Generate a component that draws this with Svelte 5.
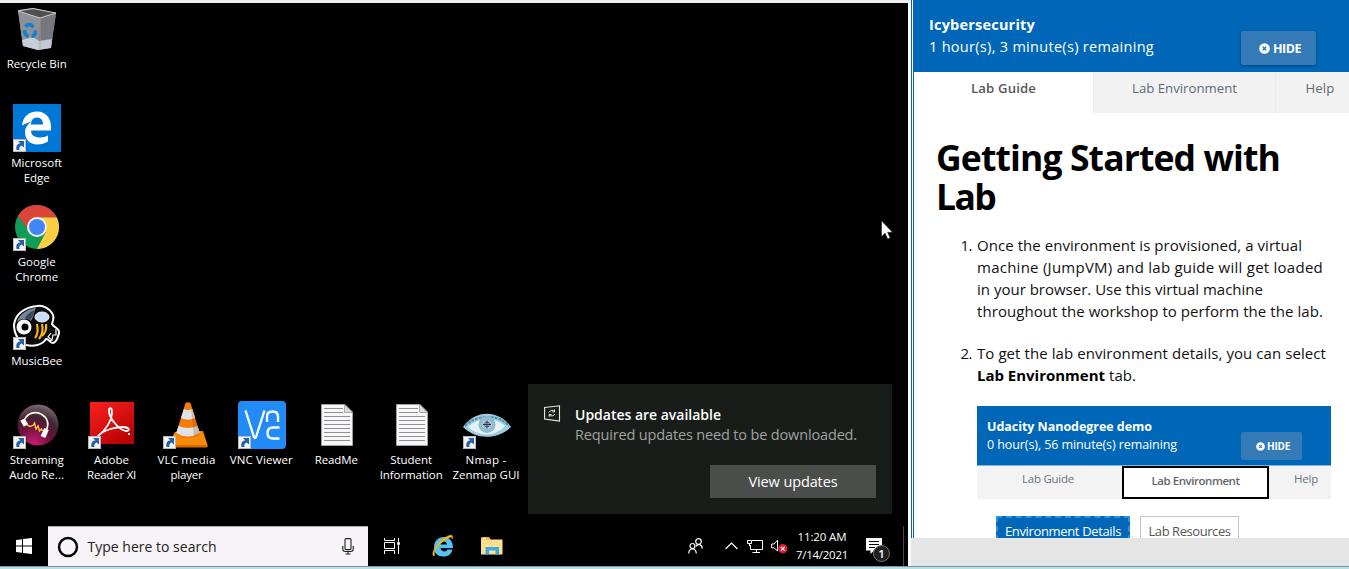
<script>
  // Spreads letter spacing so that a line of text takes the given width.
  function fit(node, width) {
    const natural = node.getBoundingClientRect().width;
    node.style.letterSpacing = (width - natural) / node.textContent.length + 'px';
  }

  const icons = [
    { id: 'bin', col: 1, row: 1, lines: [['Recycle Bin', 60]] },
    { id: 'edge', col: 1, row: 2, link: true, lines: [['Microsoft', 51], ['Edge', 26]] },
    { id: 'chrome', col: 1, row: 3, link: true, lines: [['Google', 38], ['Chrome', 43]] },
    { id: 'bee', col: 1, row: 4, link: true, lines: [['MusicBee', 51]] },
    { id: 'stream', col: 1, row: 5, link: true, lines: [['Streaming', 54], ['Audo Re...', 55]] },
    { id: 'adobe', col: 2, row: 5, link: true, lines: [['Adobe', 35], ['Reader XI', 49]] },
    { id: 'vlc', col: 3, row: 5, link: true, lines: [['VLC media', 58], ['player', 32]] },
    { id: 'vnc', col: 4, row: 5, link: true, lines: [['VNC Viewer', 63]] },
    { id: 'doc', col: 5, row: 5, lines: [['ReadMe', 43]] },
    { id: 'doc', col: 6, row: 5, lines: [['Student', 42], ['Information', 63]] },
    { id: 'nmap', col: 7, row: 5, link: true, lines: [['Nmap -', 41], ['Zenmap GUI', 67]] }
  ];

  const docLines = [7.5, 11.5, 15.5, 19.5, 23.5, 27.5, 31.5, 35.5, 39.5];
</script>

<div class="screen">
  <div class="left">
    <div class="topstrip"></div>
    <div class="desktop">
      <div class="icons">
        {#each icons as icon}
          <div class="icon" style:grid-column={icon.col} style:grid-row={icon.row}>
            <svg width="48" height="48" viewBox="0 0 48 48">
              {#if icon.id === 'bin'}
                <path d="M5 5 L20 3 L43 8 L38 43 L25 45 L10 41Z" fill="#8b8c90" />
                <path d="M5 6 L27 13 L25 45 L10 41Z" fill="#909196" />
                <path d="M27 13 L43 8 L38 42 L25 45Z" fill="#77787d" />
                <path d="M5 6 L20 3.5 L43 8 L27 13Z" fill="#504f51" stroke="#c9cacc" stroke-width="1" />
                <path d="M9 35 L20 32 L26 36 L39 34 L38 43 L25 45 L10 41Z" fill="#d4dde5" opacity=".8" />
                <path d="M27 13V45" stroke="#a4a5aa" stroke-width=".7" />
                <g fill="none" stroke="#1080d4" stroke-width="3.6">
                  <path d="M12.500 21.500q3.500-4 8 .5" />
                  <path d="M11.500 25q0 5 4 6.500" />
                  <path d="M18.500 31.500q4.500-.5 3.500-6" />
                </g>
              {:else if icon.id === 'edge'}
                <rect width="48" height="48" fill="#0078d7" />
                <path d="M9 22C10 13 16 8 24 8c9 0 14 7 14 15v4H18c0 5 4 7 9 7 3 0 6-1 8-2v6c-3 2-7 3-11 3-7 0-12-5-12-12 0-5 3-9 7-11-4 1-7 2-10 4zM18 21h12c0-4-2-7-6-7s-6 3-6 7z" fill="#fff" transform="translate(0 -.5)" />
              {:else if icon.id === 'chrome'}
                <g transform="translate(0 1)">
                  <circle cx="24" cy="23" r="22" fill="#0f9d58" />
                  <path d="M24 23 L4.9 12 A22 22 0 0 1 43.8 13.4 H24Z" fill="#db4437" />
                  <path d="M24 13.4H43.8A22 22 0 0 1 24 45L33 28Z" fill="#ffcd40" />
                  <path d="M5 12L15.4 28L24 13Z" fill="#db4437" />
                  <path d="M5 12L15.4 28L25 33L24 23Z" fill="#0f9d58" />
                  <path d="M5 12A22 22 0 0 1 24 1V18L15 25Z" fill="#db4437" />
                  <circle cx="24" cy="23" r="10" fill="#f1f1f1" />
                  <circle cx="24" cy="23" r="8" fill="#4285f4" />
                </g>
              {:else if icon.id === 'bee'}
                <g transform="translate(0 3)">
                  <path d="M24 1C31 0 36 4 39 8c3 4 1 7 0 11 2 4 8 4 7 9-1 4-2 9-6 10-4 0-3-4-7-4-4 6-12 8-20 6C6 37 1 29 1 20 2 9 12 2 24 1z" fill="#0a0a0c" stroke="#fff" stroke-width="2" />
                  <path d="M3.500 17C7 9 14 4 23 3c-2 4-2 8-5 13q-6-5-14.500 1z" fill="#77849c" />
                  <path d="M12 13C15 8 19 6 22 5c-2 4-2 7-5 10z" fill="#3d4658" />
                  <circle cx="11" cy="22" r="7.500" fill="#fff" /><circle cx="12" cy="22" r="3.500" />
                  <ellipse cx="29" cy="12" rx="7" ry="5" fill="#c9dcf8" stroke="#f4f8ff" />
                  <path d="M24 19q2 9-2 14M29 19q2 9-3 15M33 19q1 8-4 12" fill="none" stroke="#f6b40d" stroke-width="2.200" />
                  <path d="M38 28l-3 4 4 3 1-5 3 0v-6M36 36l3-1" stroke="#fff" fill="none" stroke-width="1.200" />
                </g>
              {:else if icon.id === 'stream'}
                <defs>
                  <radialGradient id="orb" cx=".4" cy=".95" r=".95">
                    <stop offset="0" stop-color="#c81c72" /><stop offset=".45" stop-color="#681138" />
                    <stop offset=".7" stop-color="#3f2433" /><stop offset="1" stop-color="#7a6672" />
                  </radialGradient>
                </defs>
                <circle cx="25" cy="24" r="20.500" fill="url(#orb)" />
                <path d="M12 18C15 12 22 10 28 13C35 17 36 23 33.500 29" fill="none" stroke="#fff8e0" stroke-width="1.600" />
                <path d="M9.500 18.500l3.500 6M33.500 28l-3.500 8" stroke="#fff" stroke-width="5" />
                <path d="M14 24l3 1.500 3-1 1.500-2.500 1.500 6 2-3 1.500 5 2-2 1 2" fill="none" stroke="#f8c82e" stroke-width="1.400" />
              {:else if icon.id === 'adobe'}
                <defs><linearGradient id="red" x1="0" y1="0" x2=".7" y2="1"><stop offset="0" stop-color="#fc2020" /><stop offset="1" stop-color="#b80303" /></linearGradient></defs>
                <rect x="2" y="1" width="44" height="42" fill="url(#red)" />
                <path d="M9 36C17 30 24 20 24 11c0-5-4-5-3 0 1 7 10 18 17 19 5 0 3-4-3-4-8 0-18 3-23 7M41 32v2" fill="none" stroke="#fff" stroke-width="1.800" />
              {:else if icon.id === 'vlc'}
                <path d="M12 31L4 45.500H45L40 30Z" fill="#f98a09" />
                <path d="M4 44H44v2.500H4z" fill="#d66b03" />
                <path d="M22.500 2Q25 .5 27.500 2L37 33Q25 42 13 33Z" fill="#f57c08" />
                <path d="M20.800 8q4.200 2 8.600 0l2.800 9q-7 3.500-14.200 0z" fill="#dfe2e6" />
                <path d="M15.500 25q9.500 4 19 0l2.400 7q-12 7-23.800 0z" fill="#dfe2e6" />
                <path d="M27.500 2L37 33q-3 3-6 3z" fill="#a84100" opacity=".25" />
              {:else if icon.id === 'vnc'}
                <rect width="48" height="48" rx="4" fill="#228bfa" />
                <path d="M7.500 9.500L16 36q1 2 2 0L26.500 9.500M29 21v-5.500q0-5 5.500-5t5.500 5V21M41.500 26.500H35q-5.500 0-5.500 5.500t5.500 5.500h6.500" fill="none" stroke="#fff" stroke-width="2.300" />
              {:else if icon.id === 'doc'}
                <path d="M8.500 3.500H32L39.500 11V44.500H8.500Z" fill="#f8f8f8" stroke="#a2a2a2" />
                <path d="M31.500 3.500V11.500H39.500Z" fill="#ddd" stroke="#999" stroke-width=".8" />
                {#each docLines as y, i}
                  <path d={`M11 ${y}H${i < 2 ? 30 : 37}`} stroke="#8c9094" stroke-width="1" />
                {/each}
              {:else if icon.id === 'nmap'}
                <path d="M0 26C12 9 35 8 48 26C36 38 14 40 0 26Z" fill="#9fcde0" />
                <path d="M2 25C12 14 35 12 46 25" fill="none" stroke="#4d8fac" stroke-width="2" stroke-dasharray="3 1" />
                <path d="M5 26C16 16 32 16 42 25C32 36 16 36 5 26Z" fill="#e1f2f8" />
                <circle cx="24" cy="23.500" r="8.500" fill="#8fbccd" /><circle cx="24" cy="23.500" r="5" fill="#aac8d3" />
                <circle cx="24" cy="23.500" r="2.500" fill="none" stroke="#293f4d" stroke-width=".8" /><path d="M24 19.500v8M20 23.500h8" stroke="#293f4d" />
              {/if}
              {#if icon.link}
                <rect x=".5" y="35.500" width="12" height="12" fill="#f4f4f4" stroke="#b9b9b9" />
                <path d="M3.500 46C2.500 41 5 39.500 7.500 39.500L5 37H11V43.500L8.700 41.500C6.500 42 6 44 6.500 46Z" fill="#2660a6" />
              {/if}
            </svg>
            <div class="label">
              {#each icon.lines as [text, width]}
                <span use:fit={width}>{text}</span>
              {/each}
            </div>
          </div>
        {/each}
      </div>

      <svg class="cursor" width="12" height="20" viewBox="0 0 12 20"><path d="M.5 .8V16.500L4.100 13.200L6.700 19L9.100 18L6.600 12.300H11.500Z" fill="#fff" stroke="#222" stroke-width=".6" /></svg>

      <div class="toast">
        <div class="toastmain">
          <svg width="17" height="17" viewBox="0 0 17 17" fill="none" stroke="#e9eae9"><path d="M.6 2.500L15.500.8V16L.6 14Z" stroke-width="1.100" /><path d="M4.800 7.500Q8 3.500 10.500 6.500M10.500 4.500v2.300H8.300M11 9Q8 12.500 5.200 9.800M5.200 11.800V9.500H7.500" /></svg>
          <div class="toasttext">
            <b use:fit={146}>Updates are available</b>
            <span use:fit={282}>Required updates need to be downloaded.</span>
          </div>
        </div>
        <button class="view"><span use:fit={89}>View updates</span></button>
      </div>

      <div class="taskbar">
        <div class="start">
          <svg width="16" height="16" viewBox="0 0 16 16" fill="#fff"><path d="M0 2L6 1.200V7.500H0ZM7 1L16 0V7.500H7ZM0 8.500H6V14.800L0 14ZM7 8.500H16V16L7 15Z" /></svg>
        </div>
        <div class="search">
          <svg width="22" height="22" viewBox="0 0 22 22"><circle cx="11" cy="11" r="9" fill="none" stroke="#050505" stroke-width="2.500" /></svg>
          <span use:fit={129}>Type here to search</span>
          <svg class="mic" width="12" height="17" viewBox="0 0 12 17" fill="none" stroke="#222" stroke-width="1.100"><rect x="3" y=".6" width="6" height="11" rx="1" /><path d="M.8 8v3q0 2.500 2.400 2.500h5.600q2.400 0 2.400-2.500V8M6 13.500v2.500M3.500 16h5" /></svg>
        </div>
        <div class="task view-tasks">
          <svg width="17" height="16" viewBox="0 0 17 16" fill="none" stroke="#fff"><path d="M.5 0v2.500h10V0M.5 4.500h10v6H.5zM.5 16v-3.500h10V16M14.500 0v16" /><path d="M13 4h3v3h-3z" fill="#fff" stroke="#000" stroke-width=".3" /></svg>
        </div>
        <div class="task ie">
          <svg width="24" height="24" viewBox="0 0 24 24"><path d="M3 14C3 7 7 3 13 3s9 5 9 11H9.500c.5 4 6 4.500 7 1.500h5c-1.500 5-4 7-9 7C7 22.500 3 19 3 14zM9.500 10.500h6.500c-.5-4-6-4-6.500 0z" fill="#55c4f3" /><path d="M3 22C-1 20 6 8 15 3c5-3 8-2 6 2 1-3-2-2-5 0C8 9 1 19 4 21z" fill="#f5c327" stroke="#d7a016" stroke-width=".6" /></svg>
        </div>
        <div class="task files">
          <svg width="22" height="18" viewBox="0 0 22 18"><path d="M0 1h8.500l1 1.500H21.500V17.500H0Z" fill="#ffe08a" /><path d="M.5 0h8v2.500h-8z" fill="#ecb52e" /><path d="M2 1h3v1H2z" fill="#fff" /><path d="M4.500 10H18v7.500h-3.500v-4H8v4H4.500Z" fill="#3aa8e8" /></svg>
        </div>
        <div class="tray">
          <svg class="people" width="15" height="16" viewBox="0 0 15 16" fill="none" stroke="#fff" stroke-width="1.200"><circle cx="10.500" cy="3.500" r="2.800" /><circle cx="4.500" cy="8" r="2.500" /><path d="M.7 15.500C1 9.500 8 9.500 8.300 15.500M8 8.500C9 5.500 14 6 14.300 10.500" /></svg>
          <svg class="chev" width="13" height="8" viewBox="0 0 13 8" fill="none" stroke="#fff" stroke-width="1.200"><path d="M.6 7L6.500 1L12.400 7" /></svg>
          <svg class="net" width="17" height="15" viewBox="0 0 17 15" fill="none" stroke="#fff"><path d="M5 1.500H15.500V10.500H3.500V6M9.500 10.500V13M5.500 13.500H13M.5 1.500h4v3h-4zM2.500 4.500V7" /></svg>
          <svg class="sound" width="17" height="15" viewBox="0 0 17 15"><path d="M.6 5H3L6.500 1.200V12L3 8.800H.6Z" fill="none" stroke="#fff" /><circle cx="11.800" cy="9.700" r="4.600" fill="#e02030" /><path d="M9.900 7.800l3.800 3.800M13.700 7.800l-3.800 3.800" stroke="#fff" stroke-width="1.100" /></svg>
          <div class="clock"><span use:fit={49}>11:20 AM</span><span use:fit={52}>7/14/2021</span></div>
          <div class="action">
            <svg width="16" height="16" viewBox="0 0 16 16"><path d="M0 0H16V12.500H8L4.500 16V12.500H0Z" fill="#fff" /><path d="M3 3.500H13M3 6.500H13M3 9.500H9" stroke="#000" /></svg>
            <span class="badge">1</span>
          </div>
          <div class="sep"></div>
        </div>
      </div>
    </div>
  </div>

  <div class="gutter"></div>

  <div class="right">
    <div class="panel">
      <header>
        <div class="title">
          <b use:fit={106}>Icybersecurity</b>
          <span use:fit={225}>1 hour(s), 3 minute(s) remaining</span>
        </div>
        <button class="hide">
          <svg width="11" height="11" viewBox="0 0 11 11"><circle cx="5.500" cy="5.500" r="5.300" fill="#fff" /><path d="M3.800 3.800l3.400 3.400M7.200 3.800L3.800 7.200" stroke="#337ab7" stroke-width="1.500" /></svg>
          <span use:fit={28}>HIDE</span>
        </button>
      </header>
      <nav>
        <div class="tab on"><span use:fit={65}>Lab Guide</span></div>
        <div class="tab env"><span use:fit={105}>Lab Environment</span></div>
        <div class="tab help"><span use:fit={29}>Help</span></div>
      </nav>
      <main>
        <h1><span use:fit={344}>Getting Started with</span><span use:fit={59}>Lab</span></h1>
        <div class="step">
          <span class="num">1.</span>
          <div class="para">
            <span use:fit={325}>Once the environment is provisioned, a virtual</span>
            <span use:fit={346}>machine (JumpVM) and lab guide will get loaded</span>
            <span use:fit={286}>in your browser. Use this virtual machine</span>
            <span use:fit={346}>throughout the workshop to perform the the lab.</span>
          </div>
        </div>
        <div class="step">
          <span class="num">2.</span>
          <div class="para">
            <span use:fit={349}>To get the lab environment details, you can select</span>
            <div class="mix"><b use:fit={128}>Lab Environment</b><span use:fit={27}>tab.</span></div>
          </div>
        </div>
        <div class="demo">
          <div class="dhead">
            <div class="dtitle"><b use:fit={165}>Udacity Nanodegree demo</b><span use:fit={190}>0 hour(s), 56 minute(s) remaining</span></div>
            <div class="dhide">
              <svg width="9" height="9" viewBox="0 0 11 11"><circle cx="5.500" cy="5.500" r="5.300" fill="#fff" /><path d="M3.800 3.800l3.400 3.400M7.200 3.800L3.800 7.200" stroke="#337ab7" stroke-width="1.500" /></svg>
              <span use:fit={23}>HIDE</span>
            </div>
          </div>
          <div class="dtabs">
            <div class="dguide"><span use:fit={52}>Lab Guide</span></div>
            <div class="denv"><span use:fit={88}>Lab Environment</span></div>
            <div class="dhelp"><span use:fit={24}>Help</span></div>
          </div>
          <div class="dbuttons">
            <div class="details"><span use:fit={116}>Environment Details</span></div>
            <div class="resources"><span use:fit={82}>Lab Resources</span></div>
          </div>
        </div>
      </main>
    </div>
    <div class="scroll"></div>
  </div>
  <div class="bottom"></div>
</div>

<style>
  :global(body) { margin: 0; overflow: hidden; }
  .screen {
    width: 1349px; height: 569px; overflow: hidden; background: #fff;
    display: grid; grid-template-columns: 908px 3px 438px; grid-template-rows: 566px 3px;
    font-family: "Open Sans", "Noto Sans", sans-serif;
  }
  .screen * { box-sizing: border-box; }
  svg { display: block; flex: none; }
  span, b { white-space: nowrap; }
  button { border: 0; font: inherit; padding: 0; }
  .left { display: flex; flex-direction: column; }
  .topstrip { height: 3px; background: #efefef; }
  .gutter { border-top: 3px solid #efefef; background: #fff; }
  .desktop { position: relative; flex: 1; background: #000; display: flex; flex-direction: column; }
  .icons { flex: 1; display: grid; grid-template-columns: repeat(7, 74.9px); grid-template-rows: repeat(5, 99px); padding-top: 2px; height: 523px; }
  .icon { display: flex; flex-direction: column; align-items: center; }
  .label { margin: 3px 1.500px 0 0; display: flex; flex-direction: column; align-items: center; color: #fff; font-size: 11.500px; line-height: 15px; }
  .cursor { position: absolute; left: 881px; top: 217px; }
  .toast { position: absolute; left: 528px; top: 381px; width: 364px; height: 130px; background: #191d1a; padding: 21px 16px 16px; display: flex; flex-direction: column; justify-content: space-between; }
  .toastmain { display: flex; gap: 14px; }
  .toasttext { display: flex; flex-direction: column; align-items: flex-start; font-size: 14.500px; line-height: 20px; color: #a0a2a0; }
  .toasttext b { color: #fff; font-weight: 600; font-size: 14px; }
  .view { align-self: flex-end; width: 166px; height: 33px; background: #4b4d4b; color: #fff; font-size: 14.500px; }
  .taskbar { height: 40px; display: flex; align-items: center; }
  .start { width: 48px; display: flex; justify-content: center; }
  .search { width: 320px; height: 40px; background: #f7f3f7; border-top: 1px solid #aaa; display: flex; align-items: center; padding: 0 14px 0 9px; color: #222; font-size: 14px; }
  .search span { margin-left: 8.500px; }
  .mic { margin-left: auto; }
  .task { display: flex; justify-content: center; }
  .view-tasks { width: 48px; }
  .ie { width: 54px; }
  .files { width: 44px; }
  .tray { margin-left: auto; height: 40px; display: flex; align-items: center; color: #fff; }
  .chev { margin-left: 22px; }
  .net { margin-left: 9px; }
  .sound { margin-left: 7px; }
  .clock { width: 60px; margin-left: 4px; display: flex; flex-direction: column; align-items: center; font-size: 11.500px; line-height: 18px; }
  .action { position: relative; margin-left: 14px; width: 24px; }
  .badge { position: absolute; left: 7px; top: 7px; width: 17px; height: 17px; border: 1px solid #777; border-radius: 50%; background: #1f1f1f; font-size: 11.500px; line-height: 15px; text-align: center; font-weight: 600; }
  .sep { width: 1px; height: 40px; background: #4a4a4a; margin: 0 4px 0 13px; }
  .right { display: flex; flex-direction: column; overflow: hidden; }
  .panel { height: 538px; overflow: hidden; border-left: 3px double #0067b8; }
  .scroll { height: 28px; background: #e5e5e5; }
  .bottom { grid-column: 1 / -1; background: #b5e0e4; border-top: 1px solid #7e9597; }
  header { height: 72px; margin-left: -1px; background: #0067b8; color: #fff; display: flex; justify-content: space-between; padding: 14px 33px 0 16px; }
  .title { display: flex; flex-direction: column; align-items: flex-start; font-size: 14.500px; line-height: 22px; }
  .title b { font-weight: 700; font-size: 14.500px; }
  .hide { width: 75px; height: 34px; margin-top: 17px; background: #337ab7; border-radius: 2px; box-shadow: 0 1px 3px rgba(0,0,0,.35); color: #fff; display: flex; align-items: center; justify-content: center; gap: 3px; padding-left: 3px; font-size: 12.500px; font-weight: 700; }
  nav { height: 41px; display: flex; color: #5d6b75; font-size: 13.200px; }
  .tab { background: #f2f2f2; display: flex; justify-content: center; line-height: 32px; border-right: 1px solid #ebebeb; }
  .on { width: 180px; background: #fff; color: #575757; font-weight: 600; }
  .env { width: 182px; }
  .help { flex: 1; padding-left: 15px; border: 0; }
  main { padding: 25px 0 0 23px; }
  h1 { margin: 0 0 18px -1px; display: flex; flex-direction: column; align-items: flex-start; font-size: 35.500px; line-height: 39px; font-weight: 700; color: #000; }
  .step { display: flex; margin-bottom: 20px; font-size: 15px; line-height: 22px; color: #111; }
  .num { width: 35px; margin-right: 5px; text-align: right; letter-spacing: -.5px; }
  .para { display: flex; flex-direction: column; align-items: flex-start; }
  .mix { display: flex; gap: 4px; }
  .mix b { color: #000; }
  .demo { width: 354px; margin: -1px 0 0 40px; padding-top: 1px; }
  .dhead { height: 59px; background: #0067b8; color: #fff; display: flex; justify-content: space-between; padding: 12px 29px 0 10px; }
  .dtitle { display: flex; flex-direction: column; align-items: flex-start; font-size: 12.500px; line-height: 18px; }
  .dtitle b { font-size: 12.500px; }
  .dhide { width: 61px; height: 28px; margin-top: 14px; background: #337ab7; border-radius: 2px; display: flex; align-items: center; justify-content: center; gap: 2px; padding-left: 3px; font-size: 10px; font-weight: 700; }
  .dtabs { height: 34px; background: #f3f3f3; border-top: 1px solid #7fb3db; display: flex; font-size: 11.500px; line-height: 26px; color: #69757f; }
  .dguide { width: 145px; display: flex; justify-content: center; padding-right: 3px; }
  .denv { width: 147px; height: 33px; background: #fff; border: 2px solid #000; display: flex; justify-content: center; font-weight: 600; color: #666; }
  .dhelp { padding-left: 25px; }
  .dbuttons { display: flex; gap: 10px; padding: 17px 0 0 19px; font-size: 13px; line-height: 28px; }
  .details { width: 134px; height: 35px; background: #0067b8; border: 2px dashed #2c8fe8; color: #fff; text-align: center; line-height: 27px; }
  .resources { width: 99px; height: 35px; background: #fff; border: 1px solid #c5c5c5; color: #555; text-align: center; }
</style>
